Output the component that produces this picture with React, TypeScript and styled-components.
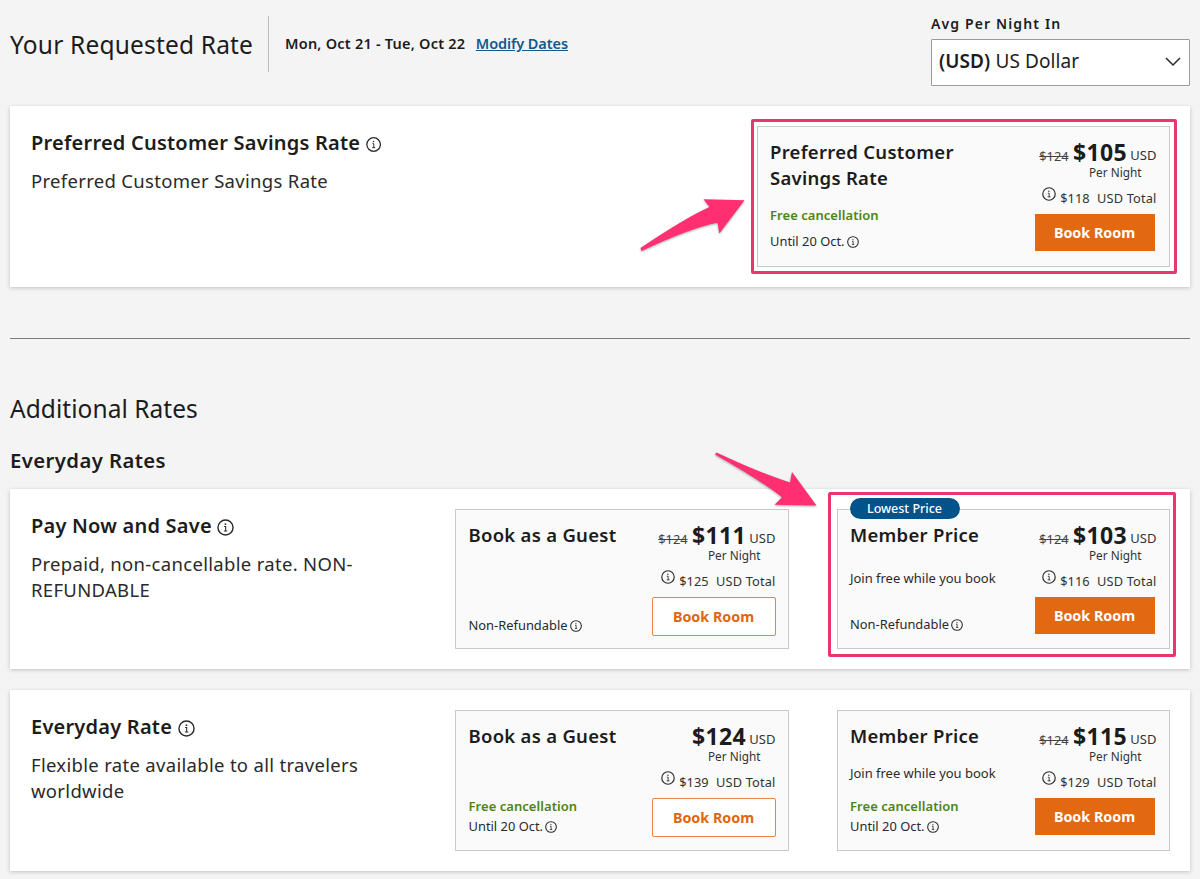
import React from 'react';
import styled, { createGlobalStyle, css } from 'styled-components';

const GlobalStyle = createGlobalStyle`
  *, *::before, *::after { box-sizing: border-box; }
  body {
    margin: 0;
    background: #f4f4f4;
    color: #1c1c1c;
    font-family: "Noto Sans", "Open Sans", sans-serif;
    overflow: hidden;
  }
  h1, h2, h3, h4, p { margin: 0; }
`;

const Page = styled.main`
  position: relative;
  width: 1200px;
  height: 879px;
  overflow: hidden;
  padding: 0 10px;
`;

const Header = styled.header`
  display: flex;
  justify-content: space-between;
  height: 106px;
`;

const Summary = styled.div`
  display: flex;
  align-items: center;
  height: 56px;
  margin-top: 16px;
`;

const PageTitle = styled.h1`
  width: 258px;
  padding-top: 2px;
  font-size: 24.5px;
  font-weight: 400;
  letter-spacing: 0.18px;
  line-height: 34px;
`;

const Dates = styled.p`
  display: flex;
  align-items: center;
  height: 100%;
  padding: 0 0 2px 16px;
  border-left: 1px solid #bdbdbd;
  font-size: 14.5px;
  font-weight: 600;
  letter-spacing: 0.23px;
`;

const ModifyLink = styled.a`
  margin-left: 10.5px;
  color: #11598f;
  font-size: 14.5px;
  font-weight: 600;
  letter-spacing: -0.1px;
  text-decoration: underline;
`;

const CurrencyField = styled.div`
  width: 259px;
  padding-top: 14px;
`;

const FieldLabel = styled.label`
  display: block;
  height: 25px;
  font-size: 14px;
  font-weight: 600;
  letter-spacing: 1.13px;
  line-height: 20px;
`;

const SelectBox = styled.div`
  display: flex;
  align-items: center;
  justify-content: space-between;
  height: 47px;
  padding: 0 8px 4px 7px;
  background: #fff;
  border: 1px solid #9b9b9b;
  border-radius: 1px;
  font-size: 19px;
  letter-spacing: 0.1px;

  b { font-weight: 600; }
  svg { margin-top: 3px; }
`;

const Card = styled.section<{ $compact?: boolean }>`
  display: flex;
  justify-content: space-between;
  height: ${({ $compact }) => ($compact ? 180 : 181)}px;
  padding: 20px 20px 0 21px;
  background: #fff;
  box-shadow: 0 1px 4px rgba(0, 0, 0, 0.22);

  & + & { margin-top: 21px; }
`;

const RateInfo = styled.div`
  width: 350px;
  padding-top: 3px;
`;

const RateName = styled.h3`
  display: flex;
  align-items: center;
  gap: 5.5px;
  font-size: 20px;
  font-weight: 600;
  letter-spacing: 0.22px;
  line-height: 28px;
  white-space: nowrap;

  svg { margin-top: 3px; }
`;

const RateText = styled.p`
  margin-top: 11px;
  font-size: 18.5px;
  letter-spacing: 0.31px;
  line-height: 26.4px;
  color: #2a2a2a;
`;

const Offers = styled.div`
  display: flex;
  align-items: flex-start;
  gap: 47.5px;
`;

type BoxKind = 'requested' | 'lowest' | 'guest' | 'member';

const boxWidth = { requested: 413.5, lowest: 333.5, guest: 334, member: 333.5 };

const OfferBox = styled.article<{ $kind: BoxKind; $short?: boolean }>`
  position: relative;
  display: flex;
  justify-content: space-between;
  width: ${({ $kind }) => boxWidth[$kind]}px;
  height: ${({ $short }) => ($short ? 140 : 141)}px;
  padding: 12px 12.5px 13px 12.5px;
  background: #fafafa;
  border: 1px solid #c8caca;
`;

const Terms = styled.div`
  display: flex;
  flex-direction: column;
  align-items: flex-start;
`;

const OfferName = styled.h4`
  width: 200px;
  margin-right: -20px;
  font-size: 18.5px;
  font-weight: 600;
  letter-spacing: 0.28px;
  line-height: 26px;
`;

const JoinNote = styled.p<{ $low?: boolean }>`
  margin-top: ${({ $low }) => ($low ? 20 : 14)}px;
  font-size: 13px;
  letter-spacing: -0.02px;
  line-height: 20px;
  color: #2a2a2a;
`;

const Policy = styled.div<{ $gap?: number; $foot: number }>`
  display: flex;
  flex-direction: column;
  gap: ${({ $gap = 0 }) => $gap}px;
  margin-top: auto;
  margin-bottom: ${({ $foot }) => $foot}px;
`;

const FreeCancel = styled.p`
  font-size: 13px;
  font-weight: 600;
  letter-spacing: 0.05px;
  line-height: 20px;
  color: #4f8411;
`;

const PolicyLine = styled.p`
  display: flex;
  align-items: center;
  gap: 2px;
  font-size: 12.9px;
  line-height: 20px;
  color: #2a2a2a;

  svg { margin-top: 2px; }
`;

const PriceColumn = styled.div`
  display: flex;
  flex-direction: column;
  align-items: flex-end;
  white-space: nowrap;
`;

const PriceLine = styled.div`
  display: flex;
  align-items: baseline;
  height: 26px;
  line-height: 26px;
`;

const OldPrice = styled.s`
  margin-right: 4.5px;
  font-size: 12.8px;
  color: #444;
`;

const Price = styled.strong`
  font-size: 23px;
  font-weight: 700;
  letter-spacing: 0.3px;
`;

const Unit = styled.span`
  position: relative;
  top: -1px;
  margin-left: 3.5px;
  font-size: 13px;
  color: #333;
`;

const PerNight = styled.div`
  margin: -1px 15px 0 0;
  font-size: 11.8px;
  line-height: 16px;
  color: #333;
`;

const Total = styled.div`
  display: flex;
  align-items: center;
  margin-top: 8px;
  font-size: 12.8px;
  line-height: 20px;
  color: #333;

  svg { margin: -8px 4px 0 0; }
  span { margin-left: 7.5px; letter-spacing: 0.15px; }
`;

const BookButton = styled.button<{ $outline?: boolean }>`
  flex-shrink: 0;
  margin-top: 6px;
  padding: 0;
  font: 700 14.3px "Noto Sans", sans-serif;
  ${({ $outline }) =>
    $outline
      ? css`
          width: 124px;
          height: 39px;
          padding-bottom: 1px;
          color: #e06612;
          background: #fff;
          border: 1px solid #e58544;
          border-radius: 2px;
        `
      : css`
          width: 120px;
          height: 37px;
          margin-right: 2px;
          padding-bottom: 1px;
          color: #fff;
          background: #e26812;
          border: 0;
        `}
`;

const Badge = styled.span`
  position: absolute;
  top: -12px;
  left: 12px;
  width: 110px;
  height: 21px;
  border-radius: 11px;
  background: #02528b;
  color: #fff;
  font-size: 12.5px;
  font-weight: 500;
  line-height: 21px;
  text-align: center;
`;

const Highlight = styled.div<{ $member?: boolean }>`
  position: absolute;
  inset: ${({ $member }) => ($member ? '-18px -7px -9px -10px' : '-8px -8px -8px -6.5px')};
  border: 3px solid #e8376f;
  border-radius: 2px;
  pointer-events: none;
`;

const Divider = styled.hr`
  height: 1px;
  margin: 51px 0 0;
  border: 0;
  background: #7c7c7c;
`;

const SectionTitle = styled.h2`
  margin-top: 53px;
  font-size: 24.5px;
  font-weight: 400;
  letter-spacing: 0.05px;
  line-height: 34px;
`;

const GroupTitle = styled.h3`
  height: 43px;
  margin-top: 20px;
  font-size: 20.3px;
  font-weight: 600;
  letter-spacing: 0.42px;
  line-height: 28px;
`;

const Annotations = styled.svg`
  position: absolute;
  inset: 0;
  pointer-events: none;
  filter: drop-shadow(0 1px 1px rgba(0, 0, 0, 0.35));
`;

function InfoIcon({ size, weight = 1.5 }: { size: number; weight?: number }) {
  return (
    <svg width={size} height={size} viewBox="0 0 18 18" fill="none" stroke="#2a2a2a" strokeWidth={weight}>
      <circle cx="9" cy="9" r="8" />
      <path d="M7.5 8h1.7v4.7M7.3 12.7h3.6" strokeWidth={weight * 0.75} />
      <circle cx="8.9" cy="5.5" r="0.9" fill="#2a2a2a" stroke="none" />
    </svg>
  );
}

type OfferProps = {
  kind: BoxKind;
  name: string;
  price: string;
  total: string;
  oldPrice?: string;
  refundable?: boolean;
  outline?: boolean;
};

function Offer({ kind, name, price, total, oldPrice, refundable, outline }: OfferProps) {
  const requested = kind === 'requested';
  const lowest = kind === 'lowest';
  const foot = requested ? 2 : refundable || lowest ? 1 : 0;
  return (
    <OfferBox $kind={kind} $short={!refundable}>
      <Terms>
        <OfferName>{name}</OfferName>
        {(lowest || kind === 'member') && <JoinNote $low={lowest}>Join free while you book</JoinNote>}
        <Policy $gap={requested ? 6 : 0} $foot={foot}>
          {refundable && <FreeCancel>Free cancellation</FreeCancel>}
          <PolicyLine>
            {refundable ? 'Until 20 Oct.' : 'Non-Refundable'}
            <InfoIcon size={12} weight={1.6} />
          </PolicyLine>
        </Policy>
      </Terms>
      <PriceColumn>
        <PriceLine>
          {oldPrice && <OldPrice>{oldPrice}</OldPrice>}
          <Price>{price}</Price>
          <Unit>USD</Unit>
        </PriceLine>
        <PerNight>Per Night</PerNight>
        <Total>
          <InfoIcon size={14} />
          {total}
          <span>USD Total</span>
        </Total>
        <BookButton $outline={outline}>Book Room</BookButton>
      </PriceColumn>
      {lowest && <Badge>Lowest Price</Badge>}
      {(requested || lowest) && <Highlight $member={lowest} />}
    </OfferBox>
  );
}

function RateHeading({ name, text }: { name: string; text: string }) {
  return (
    <RateInfo>
      <RateName>
        {name}
        <InfoIcon size={17} weight={1.5} />
      </RateName>
      <RateText>{text}</RateText>
    </RateInfo>
  );
}

export default function App() {
  return (
    <Page>
      <GlobalStyle />
      <Header>
        <Summary>
          <PageTitle>Your Requested Rate</PageTitle>
          <Dates>
            Mon, Oct 21 - Tue, Oct 22
            <ModifyLink>Modify Dates</ModifyLink>
          </Dates>
        </Summary>
        <CurrencyField>
          <FieldLabel>Avg Per Night In</FieldLabel>
          <SelectBox>
            <span>
              <b>(USD)</b> US Dollar
            </span>
            <svg width="16" height="10" viewBox="0 0 16 10" fill="none" stroke="#2a2a2a" strokeWidth="1.5">
              <path d="M1 1l7 7 7-7" />
            </svg>
          </SelectBox>
        </CurrencyField>
      </Header>

      <Card>
        <RateHeading name="Preferred Customer Savings Rate" text="Preferred Customer Savings Rate" />
        <Offers>
          <Offer kind="requested" name="Preferred Customer Savings Rate" oldPrice="$124" price="$105" total="$118" refundable />
        </Offers>
      </Card>

      <Divider />
      <SectionTitle>Additional Rates</SectionTitle>
      <GroupTitle>Everyday Rates</GroupTitle>

      <Card $compact>
        <RateHeading name="Pay Now and Save" text="Prepaid, non-cancellable rate. NON-REFUNDABLE" />
        <Offers>
          <Offer kind="guest" name="Book as a Guest" oldPrice="$124" price="$111" total="$125" outline />
          <Offer kind="lowest" name="Member Price" oldPrice="$124" price="$103" total="$116" />
        </Offers>
      </Card>
      <Card>
        <RateHeading name="Everyday Rate" text="Flexible rate available to all travelers worldwide" />
        <Offers>
          <Offer kind="guest" name="Book as a Guest" price="$124" total="$139" refundable outline />
          <Offer kind="member" name="Member Price" oldPrice="$124" price="$115" total="$129" refundable />
        </Offers>
      </Card>

      <Annotations width="1200" height="879" viewBox="0 0 1200 879" fill="#ff2f71">
        <path d="M640.5 248Q685 218 709.5 207L703.5 199.2 744.5 200.2 719.3 233.5 717.5 222.7Q690 228 641.5 251Z" />
        <path d="M716.5 452.5Q760 473 790 482.4L792 472 816.5 505.5 774.5 504.8 782 497.3Q760 480 715 454.5Z" />
      </Annotations>
    </Page>
  );
}
